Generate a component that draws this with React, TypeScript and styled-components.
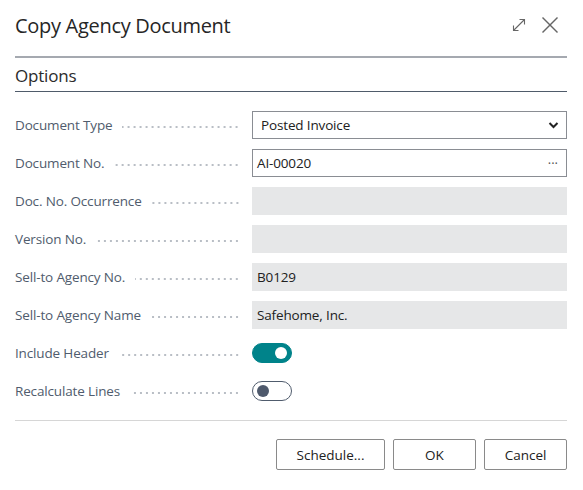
import * as React from 'react'
import styled, { createGlobalStyle } from 'styled-components'

const GlobalStyle = createGlobalStyle`
    body {
        margin: 0;
        background: #ffffff;
        font-family: 'Open Sans', 'Noto Sans', sans-serif;
        color: #212121;
    }
`

interface IField {
    label: string
    kind: 'select' | 'lookup' | 'readonly' | 'toggle'
    value?: string
    on?: boolean
}

const fields: IField[] = [
    { label: 'Document Type', kind: 'select', value: 'Posted Invoice' },
    { label: 'Document No.', kind: 'lookup', value: 'AI-00020' },
    { label: 'Doc. No. Occurrence', kind: 'readonly' },
    { label: 'Version No.', kind: 'readonly' },
    { label: 'Sell-to Agency No.', kind: 'readonly', value: 'B0129' },
    { label: 'Sell-to Agency Name', kind: 'readonly', value: 'Safehome, Inc.' },
    { label: 'Include Header', kind: 'toggle', on: true },
    { label: 'Recalculate Lines', kind: 'toggle', on: false },
]

const renderControl = (f: IField) => {
    switch (f.kind) {
        case 'select':
            return (
                <SelectBox>
                    <span>{f.value}</span>
                    <svg width="11" height="8" viewBox="0 0 11 8">
                        <path d="M1.5 2 L5.5 6 L9.5 2" fill="none" stroke="#222" strokeWidth="2" />
                    </svg>
                </SelectBox>
            )
        case 'lookup':
            return (
                <LookupBox>
                    <span>{f.value}</span>
                    <Dots>···</Dots>
                </LookupBox>
            )
        case 'readonly':
            return <ReadOnlyBox>{f.value}</ReadOnlyBox>
        default:
            return (
                <ToggleCell>
                    <Toggle on={!!f.on}>
                        <Knob on={!!f.on} />
                    </Toggle>
                </ToggleCell>
            )
    }
}

const App = () => (
    <>
        <GlobalStyle />
        <Dialog>
            <Header>
                <Title>Copy Agency Document</Title>
                <HeaderIcons>
                    <svg width="16" height="16" viewBox="0 0 16 16">
                        <g fill="none" stroke="#666" strokeWidth="1.1">
                            <path d="M2.5 13.5 L13.5 2.5" />
                            <path d="M8.5 2.5 H13.5 V7.5" />
                            <path d="M2.5 8.5 V13.5 H7.5" />
                        </g>
                    </svg>
                    <svg width="18" height="18" viewBox="0 0 18 18">
                        <g fill="none" stroke="#666" strokeWidth="1.4">
                            <path d="M1.5 1.5 L16.5 16.5" />
                            <path d="M16.5 1.5 L1.5 16.5" />
                        </g>
                    </svg>
                </HeaderIcons>
            </Header>
            <Section>
                <SectionTitle>Options</SectionTitle>
                <Form>
                    {fields.map(f => (
                        <Row key={f.label}>
                            <Label>
                                <LabelText>{f.label}</LabelText>
                                <Leader />
                            </Label>
                            {renderControl(f)}
                        </Row>
                    ))}
                </Form>
            </Section>
            <Footer>
                <Button wide>Schedule...</Button>
                <Button>OK</Button>
                <Button>Cancel</Button>
            </Footer>
        </Dialog>
    </>
)

export default App

const Dialog = styled.div`
    width: 583px;
    height: 490px;
    box-sizing: border-box;
    padding: 0 16px 0 15px;
`

const Header = styled.div`
    height: 56px;
    display: flex;
    align-items: center;
    justify-content: space-between;
    border-bottom: 2px solid #a5a9b0;
`

const Title = styled.h1`
    margin: 0 0 6px 0;
    font-size: 20px;
    font-weight: 500;
    color: #262626;
    letter-spacing: -0.3px;
`

const HeaderIcons = styled.div`
    display: flex;
    align-items: center;
    gap: 14px;
    margin: 0 8px 6px 0;
`

const Section = styled.div`
    padding-top: 6px;
`

const SectionTitle = styled.div`
    font-size: 17px;
    font-weight: 500;
    color: #2b2b2b;
    padding-bottom: 4px;
    border-bottom: 1px solid #4f5b6a;
    letter-spacing: -0.2px;
`

const Form = styled.div`
    display: flex;
    flex-direction: column;
    gap: 10px;
    padding: 19px 0 15px 0;
    border-bottom: 1px solid #d6d6d6;
`

const Row = styled.div`
    display: grid;
    grid-template-columns: 237px 1fr;
    height: 28px;
    align-items: center;
`

const Label = styled.div`
    display: flex;
    align-items: center;
    padding-right: 12px;
    height: 100%;
`

const LabelText = styled.span`
    font-size: 13.5px;
    color: #505c6d;
    white-space: nowrap;
    letter-spacing: -0.15px;
`

const Leader = styled.span`
    flex: 1;
    height: 2px;
    margin: 3px 0 0 10px;
    background-image: radial-gradient(circle, #b9bec5 0.8px, transparent 1.1px);
    background-size: 6px 2px;
    background-position: right center;
    background-repeat: repeat-x;
`

const Box = styled.div`
    height: 28px;
    box-sizing: border-box;
    display: flex;
    align-items: center;
    font-size: 13.5px;
    color: #212121;
    letter-spacing: -0.15px;
`

const SelectBox = styled(Box)`
    border: 1px solid #8a8d93;
    padding: 0 7px 0 8px;
    justify-content: space-between;
`

const LookupBox = styled(Box)`
    border: 1px solid #8a8d93;
    padding: 0 8px 0 4px;
    justify-content: space-between;
`

const Dots = styled.span`
    color: #555;
    font-size: 13px;
    letter-spacing: 0;
`

const ReadOnlyBox = styled(Box)`
    background: #e6e7e8;
    padding: 0 5px;
`

const ToggleCell = styled.div`
    display: flex;
    align-items: center;
`

interface IToggleProps {
    on: boolean
}

const Toggle = styled.div<IToggleProps>`
    width: 40px;
    height: 20px;
    box-sizing: border-box;
    border-radius: 10px;
    display: flex;
    align-items: center;
    padding: 0 4px;
    justify-content: ${p => (p.on ? 'flex-end' : 'flex-start')};
    background: ${p => (p.on ? '#00838a' : '#ffffff')};
    border: 1px solid ${p => (p.on ? '#00838a' : '#505c6d')};
`

const Knob = styled.div<IToggleProps>`
    width: 12px;
    height: 12px;
    border-radius: 50%;
    background: ${p => (p.on ? '#ffffff' : '#4e596c')};
`

const Footer = styled.div`
    display: flex;
    justify-content: flex-end;
    gap: 8px;
    padding-top: 18px;
`

interface IButtonProps {
    wide?: boolean
}

const Button = styled.button<IButtonProps>`
    height: 31px;
    width: ${p => (p.wide ? '109px' : '83px')};
    border: 1px solid #8a8a8a;
    border-radius: 2px;
    background: #ffffff;
    font-family: 'Open Sans', 'Noto Sans', sans-serif;
    font-size: 13.5px;
    color: #212121;
    padding: 0;
    cursor: pointer;
`
